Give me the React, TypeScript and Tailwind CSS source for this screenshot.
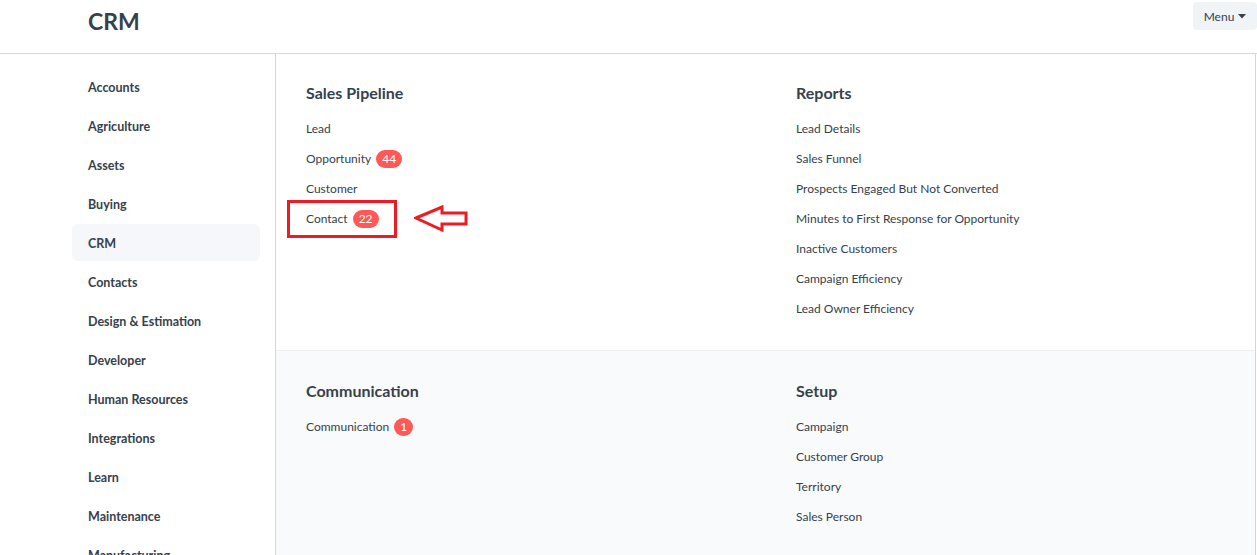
import React from 'react'

const modules = [
  'Accounts',
  'Agriculture',
  'Assets',
  'Buying',
  'CRM',
  'Contacts',
  'Design & Estimation',
  'Developer',
  'Human Resources',
  'Integrations',
  'Learn',
  'Maintenance',
  'Manufacturing',
]

type Item = { label: string; count?: number; marked?: boolean }

const Badge = ({ n }: { n: number }) => (
  <span className="ml-[5px] inline-flex h-[18px] min-w-[18px] items-center justify-center rounded-full bg-[#ff5858] px-[6px] text-[12px] leading-none text-white">
    {n}
  </span>
)

const Arrow = () => (
  <svg width="56" height="28" viewBox="0 0 56 28" className="ml-[17px]">
    <path d="M2 13 L28 2 L28 8 L52 8 L52 19 L28 19 L28 25 Z" fill="none" stroke="#ed1c24" strokeWidth="3" strokeLinejoin="miter" />
  </svg>
)

const Section = ({ title, items }: { title: string; items: Item[] }) => (
  <div>
    <h3 className="mb-[9px] text-[16px] font-bold leading-[24px] text-[#36414c]">{title}</h3>
    <div className="flex flex-col">
      {items.map((it) =>
        it.marked ? (
          <div key={it.label} className="-ml-[19px] flex h-[30px] items-center">
            <div className="flex h-[38px] w-[110px] items-center border-[3px] border-[#ed1c24] pl-[16px]">
              <span className="text-[12px] text-[#36414c]">{it.label}</span>
              {it.count !== undefined && <Badge n={it.count} />}
            </div>
            <Arrow />
          </div>
        ) : (
          <div key={it.label} className="flex h-[30px] items-center">
            <span className="text-[12px] text-[#36414c]">{it.label}</span>
            {it.count !== undefined && <Badge n={it.count} />}
          </div>
        ),
      )}
    </div>
  </div>
)

export default function App() {
  return (
    <div className="h-[555px] overflow-hidden bg-white" style={{ fontFamily: 'Lato, "Noto Sans", sans-serif' }}>
      <div className="flex h-[54px] items-start justify-between border-b border-[#d1d8dd]">
        <h1 className="ml-[88px] mt-[5px] text-[23px] font-bold leading-[32px] text-[#36414c]">CRM</h1>
        <button className="mt-[2px] flex h-[28px] w-[64px] items-center justify-center rounded-[4px] bg-[#f0f4f7] pt-[1px] text-[12px] text-[#36414c]">
          Menu
          <svg width="8" height="5" viewBox="0 0 8 5" className="ml-[4px]">
            <path d="M0 0 L8 0 L4 4.5 Z" fill="#36414c" />
          </svg>
        </button>
      </div>
      <div className="flex">
        <aside className="w-[276px] shrink-0 border-r border-[#d1d8dd] pl-[72px] pr-[15px] pt-[14px]">
          {modules.map((m) => (
            <div
              key={m}
              className={`mb-[2px] flex h-[37px] items-center rounded-[6px] pl-[16px] pt-[3px] text-[12.5px] font-bold text-[#36414c] ${m === 'CRM' ? 'bg-[#f5f7fa]' : ''}`}
            >
              {m}
            </div>
          ))}
        </aside>
        <main className="w-[980px] border-r border-[#d1d8dd]">
          <div className="grid h-[297px] grid-cols-[490px_1fr] border-b border-[#ebeff2] pl-[30px] pt-[27px]">
            <Section
              title="Sales Pipeline"
              items={[
                { label: 'Lead' },
                { label: 'Opportunity', count: 44 },
                { label: 'Customer' },
                { label: 'Contact', count: 22, marked: true },
              ]}
            />
            <Section
              title="Reports"
              items={[
                { label: 'Lead Details' },
                { label: 'Sales Funnel' },
                { label: 'Prospects Engaged But Not Converted' },
                { label: 'Minutes to First Response for Opportunity' },
                { label: 'Inactive Customers' },
                { label: 'Campaign Efficiency' },
                { label: 'Lead Owner Efficiency' },
              ]}
            />
          </div>
          <div className="grid h-[260px] grid-cols-[490px_1fr] bg-[#f9fafb] pl-[30px] pt-[28px]">
            <Section title="Communication" items={[{ label: 'Communication', count: 1 }]} />
            <Section
              title="Setup"
              items={[
                { label: 'Campaign' },
                { label: 'Customer Group' },
                { label: 'Territory' },
                { label: 'Sales Person' },
              ]}
            />
          </div>
        </main>
      </div>
    </div>
  )
}
